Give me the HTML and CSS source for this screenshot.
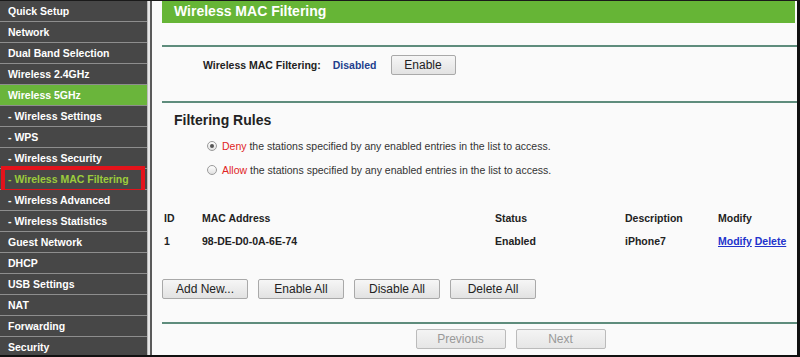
FILE: index.html
```html
<!DOCTYPE html>
<html>
<head>
<meta charset="utf-8">
<link rel="stylesheet" href="styles.css">
</head>
<body>
<div class="frame">
  <nav class="menu">
    <div class="item">Quick Setup</div>
    <div class="item">Network</div>
    <div class="item">Dual Band Selection</div>
    <div class="item">Wireless 2.4GHz</div>
    <div class="item active">Wireless 5GHz</div>
    <div class="item">- Wireless Settings</div>
    <div class="item">- WPS</div>
    <div class="item">- Wireless Security</div>
    <div class="item current">- Wireless MAC Filtering</div>
    <div class="item">- Wireless Advanced</div>
    <div class="item">- Wireless Statistics</div>
    <div class="item">Guest Network</div>
    <div class="item">DHCP</div>
    <div class="item">USB Settings</div>
    <div class="item">NAT</div>
    <div class="item">Forwarding</div>
    <div class="item">Security</div>
  </nav>
  <div class="divider"></div>
  <main class="content">
    <div class="title">Wireless MAC Filtering</div>
    <div class="rule"></div>
    <div class="status-row">
      <span class="label">Wireless MAC Filtering:</span>
      <span class="state">Disabled</span>
      <button class="btn enable">Enable</button>
    </div>
    <div class="rule"></div>
    <h2 class="section">Filtering Rules</h2>
    <div class="radios">
      <label class="radio"><span class="dot checked"></span><span class="red">Deny</span>&nbsp;the stations specified by any enabled entries in the list to access.</label>
      <label class="radio"><span class="dot"></span><span class="red">Allow</span>&nbsp;the stations specified by any enabled entries in the list to access.</label>
    </div>
    <div class="table">
      <div class="row head">
        <span class="c-id">ID</span>
        <span class="c-mac">MAC Address</span>
        <span class="c-status">Status</span>
        <span class="c-desc">Description</span>
        <span class="c-mod">Modify</span>
      </div>
      <div class="row">
        <span class="c-id">1</span>
        <span class="c-mac">98-DE-D0-0A-6E-74</span>
        <span class="c-status">Enabled</span>
        <span class="c-desc">iPhone7</span>
        <span class="c-mod"><a href="#">Modify</a> <a href="#">Delete</a></span>
      </div>
    </div>
    <div class="actions">
      <button class="btn">Add New...</button>
      <button class="btn">Enable All</button>
      <button class="btn">Disable All</button>
      <button class="btn">Delete All</button>
    </div>
    <div class="rule"></div>
    <div class="pager">
      <button class="btn pg" disabled>Previous</button>
      <button class="btn pg" disabled>Next</button>
    </div>
  </main>
</div>
</body>
</html>
```

FILE: styles.css
```css
html, body {
  margin: 0;
  padding: 0;
  background: #000;
}
.frame {
  width: 800px;
  height: 357px;
  box-sizing: border-box;
  border-top: 1px solid #1a1a1a;
  border-right: 3px solid #111;
  border-bottom: 2px solid #111;
  display: flex;
  overflow: hidden;
  background: #fafafa;
  font-family: "Liberation Sans", Arial, sans-serif;
}
.menu {
  width: 147px;
  flex: none;
  background: #4a4a4a;
  display: flex;
  flex-direction: column;
}
.item {
  height: 20px;
  line-height: 20px;
  border-bottom: 1px solid #8e8e8e;
  color: #fff;
  font-size: 10.5px;
  font-weight: bold;
  padding-left: 8px;
  white-space: nowrap;
  background: #474747;
  position: relative;
}
.item.active {
  background: #6ab53b;
}
.item.current {
  color: #9ccc3c;
}
.item.current::after {
  content: "";
  position: absolute;
  left: 1px;
  right: 2px;
  top: -3px;
  bottom: -4px;
  border: 4px solid #e3131b;
}
.divider {
  width: 5px;
  flex: none;
  background: #e6e6e6;
  border-left: 1px solid #bbb;
  border-right: 2px solid #5a5a5a;
  box-sizing: border-box;
}
.content {
  flex: 1;
  padding-left: 10px;
  background: #fafafa;
  display: flex;
  flex-direction: column;
}
.title {
  height: 22px;
  line-height: 21px;
  background: #66b536;
  color: #fff;
  font-size: 14px;
  font-weight: bold;
  padding-left: 12px;
  margin-right: 2px;
}
.rule {
  height: 2px;
  background: #5e8c7c;
  flex: none;
}
.title + .rule {
  margin-top: 22px;
}
.status-row {
  height: 54px;
  display: flex;
  align-items: flex-start;
  padding-left: 41px;
  padding-top: 8px;
  font-size: 10.5px;
  font-weight: bold;
  box-sizing: border-box;
  line-height: 20px;
}
.label {
  color: #222;
}
.state {
  color: #223f8d;
  margin-left: 12px;
}
.btn {
  font-family: "Liberation Sans", Arial, sans-serif;
  font-size: 12px;
  font-weight: normal;
  color: #222;
  background: linear-gradient(#f6f6f6, #e2e2e2);
  border: 1px solid #a9a9a9;
  border-radius: 2px;
  height: 20px;
  padding: 0;
  margin: 0;
}
.enable {
  width: 65px;
  margin-left: 14px;
}
.section {
  margin: 8px 0 0 12px;
  font-size: 14px;
  font-weight: bold;
  color: #222;
  height: 18px;
  line-height: 18px;
}
.radios {
  margin-top: 8px;
  padding-left: 45px;
  display: flex;
  flex-direction: column;
  gap: 7px;
  font-size: 10.5px;
  color: #333;
}
.radio {
  display: flex;
  align-items: center;
  height: 17px;
}
.dot {
  width: 10px;
  height: 10px;
  border-radius: 50%;
  border: 1px solid #9a9a9a;
  background: linear-gradient(#fff, #e0e0e0);
  margin-right: 5px;
  position: relative;
  box-sizing: border-box;
}
.dot.checked::after {
  content: "";
  position: absolute;
  left: 2px;
  top: 2px;
  width: 4px;
  height: 4px;
  border-radius: 50%;
  background: #555;
}
.red {
  color: #e02424;
}
.table {
  margin-top: 29px;
  font-size: 10.5px;
  font-weight: bold;
  color: #222;
}
.row {
  display: flex;
  height: 23px;
  line-height: 23px;
}
.c-id { width: 38px; padding-left: 2px; }
.c-mac { width: 293px; }
.c-status { width: 130px; }
.c-desc { width: 93px; }
.c-mod { white-space: nowrap; }
.c-mod a {
  color: #2233cc;
  text-decoration: underline;
}
.actions {
  margin-top: 26px;
  display: flex;
  gap: 10px;
  height: 20px;
  margin-bottom: 23px;
}
.actions .btn {
  width: 86px;
}
.pager {
  display: flex;
  justify-content: center;
  gap: 10px;
  margin-top: 5px;
  padding-left: 62px;
}
.pg {
  width: 90px;
  color: #999;
  background: linear-gradient(#f4f4f4, #e6e6e6);
  border-color: #bbb;
}
```
